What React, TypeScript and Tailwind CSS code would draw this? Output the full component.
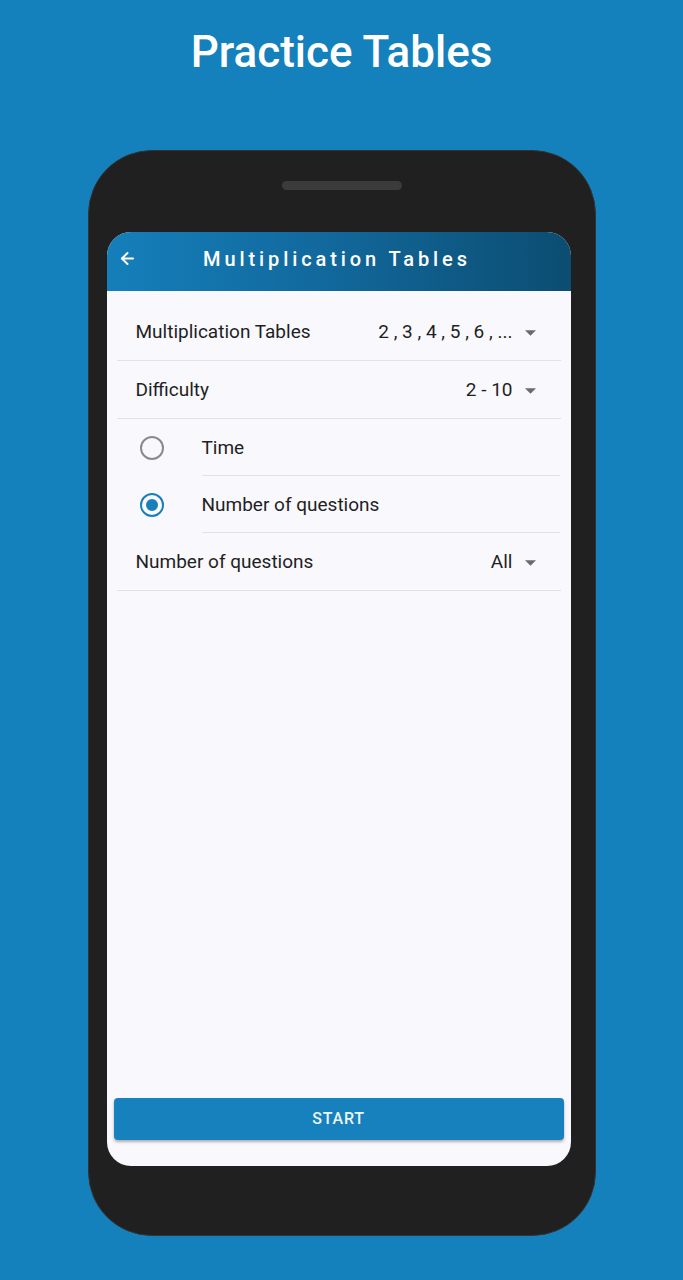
import { ArrowLeft } from "lucide-react";

function Caret() {
  return (
    <svg width="11" height="6" viewBox="0 0 10 5" className="ml-3 shrink-0">
      <path d="M0 0 L5 5 L10 0 Z" fill="#6b6b6b" />
    </svg>
  );
}

function SelectRow({ label, value }: { label: string; value: string }) {
  return (
    <div className="mx-[10px] flex h-[58px] items-center border-b border-[#e2e1e6] pl-[19px] pr-[25px] pt-[2px]">
      <span className="flex-1 text-[19px] text-[#1f1f1f]">{label}</span>
      <span className="text-[19px] text-[#1f1f1f]">{value}</span>
      <Caret />
    </div>
  );
}

function RadioRow({ label, checked }: { label: string; checked?: boolean }) {
  return (
    <div className="flex h-[57px] items-center">
      <div className="flex w-[95px] shrink-0 justify-end pr-[38px]">
        <span
          className={`flex h-[24px] w-[24px] items-center justify-center rounded-full border-2 ${
            checked ? "border-[#1a7fb8]" : "border-[#8a8a8a]"
          }`}
        >
          {checked && <span className="h-[12px] w-[12px] rounded-full bg-[#1a7fb8]" />}
        </span>
      </div>
      <div className="mr-[11px] flex h-full flex-1 items-center border-b border-[#e2e1e6] pt-[2px]">
        <span className="text-[19px] text-[#1f1f1f]">{label}</span>
      </div>
    </div>
  );
}

export default function App() {
  return (
    <div
      className="flex h-[1280px] w-full flex-col items-center bg-[#1581bc]"
      style={{ fontFamily: "Roboto, 'Noto Sans', sans-serif" }}
    >
      <h1 className="mt-[25px] text-[44px] font-medium leading-[54px] text-white">Practice Tables</h1>

      <div className="mt-[71px] flex h-[1086px] w-[508px] flex-col rounded-[64px] border border-[#333] bg-[#202020]">
        <div className="mx-auto mt-[30px] h-[9px] w-[120px] rounded-full bg-[#3b3b3b]" />

        <div className="ml-[18px] mt-[42px] flex h-[934px] w-[464px] flex-col overflow-hidden rounded-[24px] bg-[#f9f8fd]">
          <div className="flex h-[59px] shrink-0 items-center bg-gradient-to-r from-[#157fbb] via-[#11679a] to-[#0c4d71] px-[11px] pb-[6px]">
            <ArrowLeft className="h-[19px] w-[19px] text-white" strokeWidth={2.5} />
            <span className="flex-1 pr-[22px] text-center text-[20px] font-medium tracking-[3.9px] text-white">
              Multiplication Tables
            </span>
          </div>

          <div className="flex flex-1 flex-col pt-[12px]">
            <SelectRow label="Multiplication Tables" value="2 , 3 , 4 , 5 , 6 , ..." />
            <SelectRow label="Difficulty" value="2 - 10" />
            <RadioRow label="Time" />
            <RadioRow label="Number of questions" checked />
            <SelectRow label="Number of questions" value="All" />
          </div>

          <div className="px-[7px] pb-[26px]">
            <button className="flex h-[42px] w-full items-center justify-center rounded-[4px] bg-[#1681bc] text-[16px] font-medium tracking-[0.8px] text-[#eaf4fa] shadow-[0_2px_3px_rgba(0,0,0,0.3)]">
              START
            </button>
          </div>
        </div>
      </div>
    </div>
  );
}
